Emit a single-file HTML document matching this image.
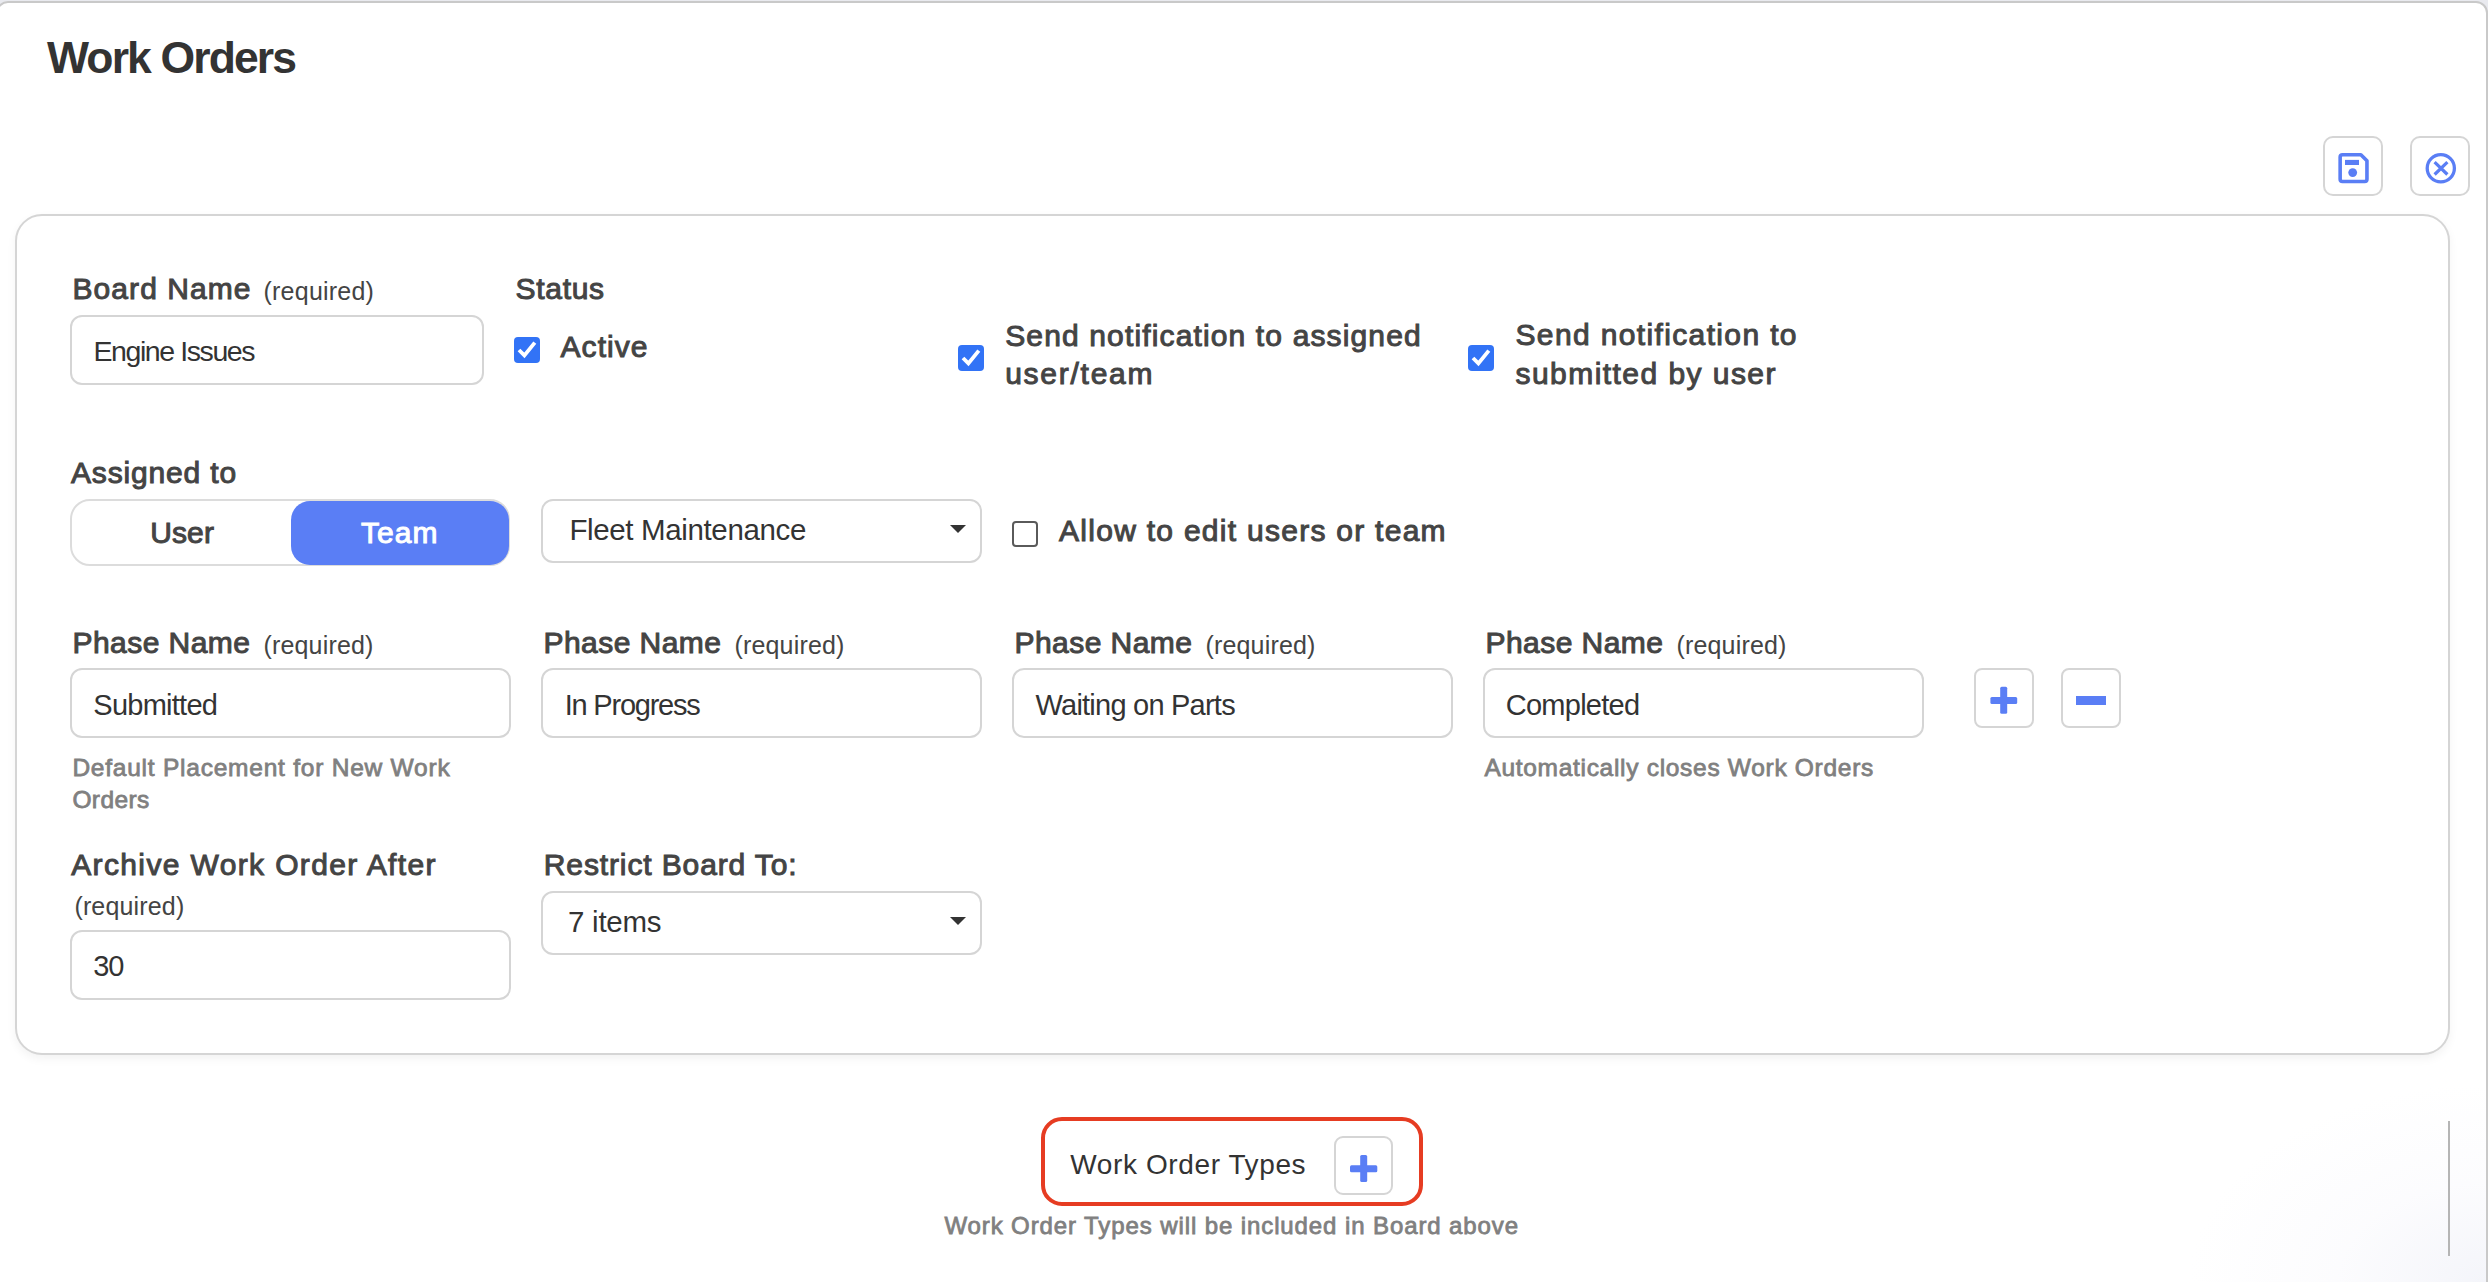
<!DOCTYPE html>
<html><head><meta charset="utf-8"><title>Work Orders</title>
<style>
html,body{margin:0;padding:0;width:2488px;height:1282px;overflow:hidden;background:#e9eaef;font-family:"Liberation Sans",sans-serif}
.b{position:absolute;box-sizing:content-box}
.t{position:absolute;white-space:nowrap;line-height:1.117}
</style></head><body>
<div class="b" style="left:-4px;top:1px;width:2488px;height:1400px;border:2px solid #c9c9c9;border-radius:12px;background:#fff"></div>
<div class="t" style="left:47.0px;top:32.7px;font-size:44.5px;letter-spacing:-1.87px;font-weight:bold;color:#333;">Work Orders</div>
<div class="b" style="left:2323px;top:136px;width:56px;height:56px;border:2px solid #d5d5d5;border-radius:10px;background:#fff;"></div>
<div class="b" style="left:2410px;top:136px;width:56px;height:56px;border:2px solid #d5d5d5;border-radius:10px;background:#fff;"></div>
<svg class="b" style="left:2336px;top:151px" width="34" height="34" viewBox="0 0 34 34">
<path d="M4.15 6 Q4.15 3.75 6.4 3.75 L24.9 3.75 L30.95 9.8 L30.95 28.2 Q30.95 30.45 28.7 30.45 L6.4 30.45 Q4.15 30.45 4.15 28.2 Z" fill="none" stroke="#5a7ef5" stroke-width="3.6" stroke-linejoin="round"/>
<rect x="9" y="8.9" width="14" height="5.1" fill="#5a7ef5"/>
<circle cx="16.7" cy="21.6" r="4.4" fill="#5a7ef5"/>
</svg>
<svg class="b" style="left:2423px;top:150px" width="36" height="36" viewBox="0 0 36 36">
<circle cx="17.8" cy="18.3" r="13.6" fill="none" stroke="#5a7ef5" stroke-width="3.3"/>
<path d="M11.6 12.1 L24.4 24.5 M24.4 12.1 L11.6 24.5" stroke="#5a7ef5" stroke-width="3.2"/>
</svg>
<div class="b" style="left:15px;top:214px;width:2431px;height:837px;border:2px solid #d5d5d5;border-radius:27px;background:#fff;box-shadow:0 4px 10px rgba(0,0,0,0.05)"></div>
<div class="t" style="left:72.5px;top:272.1px;font-size:30.0px;letter-spacing:1.07px;color:#444;-webkit-text-stroke:1.0px #444;">Board Name</div>
<div class="t" style="left:263.5px;top:278.4px;font-size:25.0px;letter-spacing:0.23px;color:#444;">(required)</div>
<div class="b" style="left:70px;top:315px;width:410px;height:66px;border:2px solid #d5d5d5;border-radius:12px;background:#fff;"></div>
<div class="t" style="left:93.5px;top:336.2px;font-size:28.5px;letter-spacing:-1.42px;color:#333;">Engine Issues</div>
<div class="t" style="left:515.5px;top:272.1px;font-size:30.0px;letter-spacing:0.70px;color:#444;-webkit-text-stroke:1.0px #444;">Status</div>
<svg class="b" style="left:514px;top:337px" width="26" height="26" viewBox="0 0 26 26"><rect x="0" y="0" width="26" height="26" rx="4" fill="#3273f6"/><path d="M5.0 13.0 L10.4 18.4 L20.8 5.6" fill="none" stroke="#fff" stroke-width="3.8"/></svg>
<div class="t" style="left:560.5px;top:330.1px;font-size:30.0px;letter-spacing:1.06px;color:#444;-webkit-text-stroke:1.0px #444;">Active</div>
<svg class="b" style="left:958px;top:345px" width="26" height="26" viewBox="0 0 26 26"><rect x="0" y="0" width="26" height="26" rx="4" fill="#3273f6"/><path d="M5.0 13.0 L10.4 18.4 L20.8 5.6" fill="none" stroke="#fff" stroke-width="3.8"/></svg>
<div class="t" style="left:1005.2px;top:318.6px;font-size:30.0px;letter-spacing:1.14px;color:#444;-webkit-text-stroke:1.0px #444;">Send notification to assigned</div>
<div class="t" style="left:1005.2px;top:357.1px;font-size:30.0px;letter-spacing:1.74px;color:#444;-webkit-text-stroke:1.0px #444;">user/team</div>
<svg class="b" style="left:1468px;top:345px" width="26" height="26" viewBox="0 0 26 26"><rect x="0" y="0" width="26" height="26" rx="4" fill="#3273f6"/><path d="M5.0 13.0 L10.4 18.4 L20.8 5.6" fill="none" stroke="#fff" stroke-width="3.8"/></svg>
<div class="t" style="left:1515.5px;top:318.1px;font-size:30.0px;letter-spacing:1.36px;color:#444;-webkit-text-stroke:1.0px #444;">Send notification to</div>
<div class="t" style="left:1515.5px;top:357.1px;font-size:30.0px;letter-spacing:1.45px;color:#444;-webkit-text-stroke:1.0px #444;">submitted by user</div>
<div class="t" style="left:71.0px;top:456.1px;font-size:30.0px;letter-spacing:0.83px;color:#444;-webkit-text-stroke:1.0px #444;">Assigned to</div>
<div class="b" style="left:70px;top:499px;width:436px;height:63px;border:2px solid #dcdcdc;border-radius:20px;background:#fff;"></div>
<div class="b" style="left:291px;top:501px;width:218px;height:64px;border-radius:19px;background:#5a7ef5"></div>
<div class="t" style="left:150.2px;top:516.4px;font-size:30.0px;letter-spacing:0.13px;color:#444;-webkit-text-stroke:1.0px #444;">User</div>
<div class="t" style="left:360.9px;top:516.4px;font-size:30.0px;letter-spacing:1.07px;color:#fff;-webkit-text-stroke:1.0px #fff;">Team</div>
<div class="b" style="left:541px;top:499px;width:437px;height:60px;border:2px solid #d5d5d5;border-radius:12px;background:#fff;"></div>
<div class="t" style="left:569.4px;top:513.6px;font-size:29.5px;letter-spacing:-0.36px;color:#333;">Fleet Maintenance</div>
<div class="b" style="left:950px;top:525px;width:0;height:0;border-left:8px solid transparent;border-right:8px solid transparent;border-top:8px solid #333"></div>
<div class="b" style="left:1012px;top:521px;width:22px;height:22px;border:2px solid #5a5a5a;border-radius:4px;background:#fff"></div>
<div class="t" style="left:1059.1px;top:514.1px;font-size:30.0px;letter-spacing:1.27px;color:#444;-webkit-text-stroke:1.0px #444;">Allow to edit users or team</div>
<div class="t" style="left:72.5px;top:626.1px;font-size:30.0px;letter-spacing:0.44px;color:#444;-webkit-text-stroke:1.0px #444;">Phase Name</div>
<div class="t" style="left:263.4px;top:632.4px;font-size:25.0px;letter-spacing:0.18px;color:#444;">(required)</div>
<div class="b" style="left:70px;top:668px;width:437px;height:66px;border:2px solid #d5d5d5;border-radius:12px;background:#fff;"></div>
<div class="t" style="left:93.3px;top:689.3px;font-size:29.0px;letter-spacing:-0.74px;color:#333;">Submitted</div>
<div class="t" style="left:543.5px;top:626.1px;font-size:30.0px;letter-spacing:0.44px;color:#444;-webkit-text-stroke:1.0px #444;">Phase Name</div>
<div class="t" style="left:734.4px;top:632.4px;font-size:25.0px;letter-spacing:0.18px;color:#444;">(required)</div>
<div class="b" style="left:541px;top:668px;width:437px;height:66px;border:2px solid #d5d5d5;border-radius:12px;background:#fff;"></div>
<div class="t" style="left:564.8px;top:689.3px;font-size:29.0px;letter-spacing:-1.23px;color:#333;">In Progress</div>
<div class="t" style="left:1014.5px;top:626.1px;font-size:30.0px;letter-spacing:0.44px;color:#444;-webkit-text-stroke:1.0px #444;">Phase Name</div>
<div class="t" style="left:1205.4px;top:632.4px;font-size:25.0px;letter-spacing:0.18px;color:#444;">(required)</div>
<div class="b" style="left:1012px;top:668px;width:437px;height:66px;border:2px solid #d5d5d5;border-radius:12px;background:#fff;"></div>
<div class="t" style="left:1035.5px;top:689.3px;font-size:29.0px;letter-spacing:-0.77px;color:#333;">Waiting on Parts</div>
<div class="t" style="left:1485.5px;top:626.1px;font-size:30.0px;letter-spacing:0.44px;color:#444;-webkit-text-stroke:1.0px #444;">Phase Name</div>
<div class="t" style="left:1676.4px;top:632.4px;font-size:25.0px;letter-spacing:0.18px;color:#444;">(required)</div>
<div class="b" style="left:1483px;top:668px;width:437px;height:66px;border:2px solid #d5d5d5;border-radius:12px;background:#fff;"></div>
<div class="t" style="left:1505.8px;top:689.3px;font-size:29.0px;letter-spacing:-0.75px;color:#333;">Completed</div>
<div class="b" style="left:1974px;top:668px;width:56px;height:56px;border:2px solid #d5d5d5;border-radius:8px;background:#fff;"></div>
<div class="b" style="left:2061px;top:668px;width:56px;height:56px;border:2px solid #d5d5d5;border-radius:8px;background:#fff;"></div>
<svg class="b" style="left:1990px;top:686px" width="28" height="28" viewBox="0 0 28 28"><rect x="10.2" y="0.8" width="7" height="27" rx="1.5" fill="#5a7ef5"/><rect x="0.4" y="11" width="26.8" height="7" rx="1.5" fill="#5a7ef5"/></svg>
<div class="b" style="left:2076px;top:696px;width:30px;height:9px;background:#5a7ef5"></div>
<div class="t" style="left:72.4px;top:754.0px;font-size:24.5px;letter-spacing:0.77px;color:#808080;-webkit-text-stroke:0.8px #808080;">Default Placement for New Work</div>
<div class="t" style="left:72.4px;top:786.0px;font-size:24.5px;letter-spacing:0.40px;color:#808080;-webkit-text-stroke:0.8px #808080;">Orders</div>
<div class="t" style="left:1484.4px;top:754.3px;font-size:24.5px;letter-spacing:0.70px;color:#808080;-webkit-text-stroke:0.8px #808080;">Automatically closes Work Orders</div>
<div class="t" style="left:71.2px;top:848.1px;font-size:30.0px;letter-spacing:1.37px;color:#444;-webkit-text-stroke:1.0px #444;">Archive Work Order After</div>
<div class="t" style="left:74.4px;top:893.4px;font-size:25.0px;letter-spacing:0.16px;color:#444;">(required)</div>
<div class="b" style="left:70px;top:930px;width:437px;height:66px;border:2px solid #d5d5d5;border-radius:12px;background:#fff;"></div>
<div class="t" style="left:93.3px;top:949.8px;font-size:29.0px;letter-spacing:-1.30px;color:#333;">30</div>
<div class="t" style="left:543.8px;top:848.1px;font-size:30.0px;letter-spacing:0.88px;color:#444;-webkit-text-stroke:1.0px #444;">Restrict Board To:</div>
<div class="b" style="left:541px;top:891px;width:437px;height:60px;border:2px solid #d5d5d5;border-radius:12px;background:#fff;"></div>
<div class="t" style="left:568.0px;top:906.0px;font-size:29.5px;letter-spacing:-0.25px;color:#333;">7 items</div>
<div class="b" style="left:950px;top:917px;width:0;height:0;border-left:8px solid transparent;border-right:8px solid transparent;border-top:8px solid #333"></div>
<div class="b" style="left:1041px;top:1117px;width:374px;height:81px;border:4px solid #e63c22;border-radius:21px;background:#fff"></div>
<div class="t" style="left:1070.3px;top:1149.3px;font-size:28.0px;letter-spacing:0.61px;color:#333;">Work Order Types</div>
<div class="b" style="left:1334px;top:1136px;width:55px;height:55px;border:2px solid #d5d5d5;border-radius:9px;background:#fff;"></div>
<svg class="b" style="left:1350px;top:1155px" width="28" height="28" viewBox="0 0 28 28"><rect x="10.2" y="0" width="7" height="27" rx="1.5" fill="#5a7ef5"/><rect x="0" y="10.2" width="27.3" height="7" rx="1.5" fill="#5a7ef5"/></svg>
<div class="t" style="left:944.4px;top:1212.7px;font-size:24.0px;letter-spacing:0.90px;color:#808080;-webkit-text-stroke:0.8px #808080;">Work Order Types will be included in Board above</div>
<div class="b" style="left:2186px;top:1082px;width:300px;height:200px;background:radial-gradient(ellipse at 100% 100%, rgba(244,245,250,1) 0%, rgba(250,250,253,0.6) 35%, rgba(255,255,255,0) 70%)"></div>
<div class="b" style="left:2448px;top:1121px;width:2px;height:135px;background:#b5b5b5"></div>
</body></html>
